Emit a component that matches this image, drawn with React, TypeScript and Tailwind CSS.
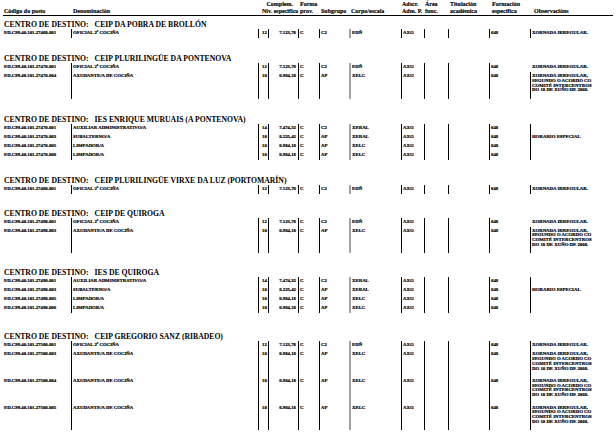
import clsx from "clsx";

type Row = {
  code: string;
  den: string;
  niv: string;
  comp: string;
  sub: string;
  corpo: string;
  obs?: string[];
  noObsLine?: boolean;
};

const cols =
  "grid grid-cols-[71px_187px_10px_30px_21px_30px_52px_23px_24px_41px_41px_86px]";

const OFICIAL = { den: "OFICIAL 2ª COCIÑA", niv: "12", comp: "7.123,76", sub: "C2", corpo: "EDÑ", obs: ["XORNADA IRREGULAR."] };
const AXUDANTE = {
  den: "AXUDANTE/A DE COCIÑA",
  niv: "10",
  comp: "6.984,18",
  sub: "AP",
  corpo: "XELC",
  obs: ["XORNADA IRREGULAR,", "SEGUNDO O ACORDO CO", "COMITÉ INTERCENTROS", "DO 10 DE XUÑO DE 2008."],
};
const AUXILIAR = { den: "AUXILIAR ADMINISTRATIVO/A", niv: "14", comp: "7.474,32", sub: "C2", corpo: "XERAL" };
const SUBALTERNO = { den: "SUBALTERNO/A", niv: "10", comp: "8.225,42", sub: "AP", corpo: "XERAL", obs: ["HORARIO ESPECIAL"] };
const LIMPADOR = { den: "LIMPADOR/A", niv: "10", comp: "6.984,18", sub: "AP", corpo: "XELC" };

const sections: { name: string; mt: string; rows: Row[] }[] = [
  {
    name: "CEIP DA POBRA DE BROLLÓN",
    mt: "mt-[5px]",
    rows: [{ code: "ED.C99.40.101.27460.001", ...OFICIAL }],
  },
  {
    name: "CEIP PLURILINGÜE DA PONTENOVA",
    mt: "mt-[17px]",
    rows: [
      { code: "ED.C99.40.101.27470.001", ...OFICIAL, noObsLine: true },
      { code: "ED.C99.40.101.27470.004", ...AXUDANTE },
    ],
  },
  {
    name: "IES ENRIQUE MURUAIS (A PONTENOVA)",
    mt: "mt-[17px]",
    rows: [
      { code: "ED.C99.40.101.27470.001", ...AUXILIAR },
      { code: "ED.C99.40.101.27470.003", ...SUBALTERNO },
      { code: "ED.C99.40.101.27470.005", ...LIMPADOR },
      { code: "ED.C99.40.101.27470.006", ...LIMPADOR },
    ],
  },
  {
    name: "CEIP PLURILINGÜE VIRXE DA LUZ (PORTOMARÍN)",
    mt: "mt-[17px]",
    rows: [{ code: "ED.C99.40.101.27480.001", ...OFICIAL }],
  },
  {
    name: "CEIP DE QUIROGA",
    mt: "mt-[16px]",
    rows: [
      { code: "ED.C99.40.101.27490.001", ...OFICIAL, noObsLine: true },
      { code: "ED.C99.40.101.27490.003", ...AXUDANTE },
    ],
  },
  {
    name: "IES DE QUIROGA",
    mt: "mt-[16px]",
    rows: [
      { code: "ED.C99.40.101.27490.001", ...AUXILIAR },
      { code: "ED.C99.40.101.27490.003", ...SUBALTERNO },
      { code: "ED.C99.40.101.27490.005", ...LIMPADOR },
      { code: "ED.C99.40.101.27490.006", ...LIMPADOR },
    ],
  },
  {
    name: "CEIP GREGORIO SANZ (RIBADEO)",
    mt: "mt-[20px]",
    rows: [
      { code: "ED.C99.40.101.27500.001", ...OFICIAL },
      { code: "ED.C99.40.101.27500.003", ...AXUDANTE },
      { code: "ED.C99.40.101.27500.004", ...AXUDANTE },
      { code: "ED.C99.40.101.27500.005", ...AXUDANTE },
    ],
  },
];

const cell = "pt-[2px] pb-[2.2px] leading-[4.8px] whitespace-nowrap";
const line = "border-l border-black";

const HeadCell = ({ top, bottom, className }: { top?: string; bottom: string; className?: string }) => {
  return (
    <div className={clsx("flex flex-col justify-end whitespace-nowrap", className)}>
      {top && <span>{top}</span>}
      <span>{bottom}</span>
    </div>
  );
};

const DataRow = ({ row }: { row: Row }) => {
  const multi = (row.obs?.length ?? 0) > 1;
  return (
    <>
      <div className={clsx(cell, "pl-[4px]")}>{row.code}</div>
      <div className={clsx(cell, line, "pl-[1px]")}>{row.den}</div>
      <div className={clsx(cell, line, "pl-[3px]")}>{row.niv}</div>
      <div className={clsx(cell, line, "text-right pr-[2px]")}>{row.comp}</div>
      <div className={clsx(cell, line, "pl-[1px]")}>C</div>
      <div className={clsx(cell, line, "pl-[1px]")}>{row.sub}</div>
      <div className={clsx(cell, "border-l-2 border-[#a3a3a3] pl-[1px]")}>{row.corpo}</div>
      <div className={clsx(cell, line, "pl-[1px]")}>AXG</div>
      <div className={clsx(cell, line)}></div>
      <div className={clsx(cell, line)}></div>
      <div className={clsx(cell, line, "pl-[1px]")}>648</div>
      <div className={clsx(cell, row.noObsLine ? "border-l border-transparent" : line, "pl-[1px]", multi && "pb-[5.5px]")}>
        {row.obs?.map((o) => (
          <div key={o}>{o}</div>
        ))}
      </div>
    </>
  );
};

export default function App() {
  return (
    <div className="w-[616px] h-[439px] overflow-hidden bg-white text-black font-['Liberation_Serif',serif] font-bold">
      <div className={clsx(cols, "h-[15px] pt-[0.5px] text-[6px] leading-[7.3px] [-webkit-text-stroke:0.15px_black]")}>
        <HeadCell bottom="Código do posto" className="pl-[4px]" />
        <HeadCell bottom="Denominación" className="pl-[2px]" />
        <div className="col-span-2 flex flex-col justify-end whitespace-nowrap">
          <span className="text-right pr-[5px]">Complem.</span>
          <span className="pl-[4px]">Niv. especifico</span>
        </div>
        <HeadCell top="Forma" bottom="prov." className="pl-[2px]" />
        <HeadCell bottom="Subgrupo" className="pl-[2px]" />
        <HeadCell bottom="Corpo/escala" className="pl-[2px]" />
        <HeadCell top="Adscr." bottom="Adm. P." className="pl-[1px]" />
        <HeadCell top="Área" bottom="func." className="pl-[1px]" />
        <HeadCell top="Titulación" bottom="académica" className="pl-[2px]" />
        <HeadCell top="Formación" bottom="específica" className="pl-[3px]" />
        <HeadCell bottom="Observacións" className="pl-[4px]" />
      </div>
      <div className="mx-[3px] h-px bg-black" />

      {sections.map((s) => (
        <section key={s.name} className={s.mt}>
          <h2 className="flex gap-[6px] pl-[4px] text-[7.7px] leading-[8px] whitespace-nowrap">
            <span>CENTRO DE DESTINO:</span>
            <span>{s.name}</span>
          </h2>
          <div className={clsx(cols, "text-[4.8px] [-webkit-text-stroke:0.2px_black]")}>
            {s.rows.map((r, i) => (
              <DataRow key={i} row={r} />
            ))}
          </div>
        </section>
      ))}
    </div>
  );
}
